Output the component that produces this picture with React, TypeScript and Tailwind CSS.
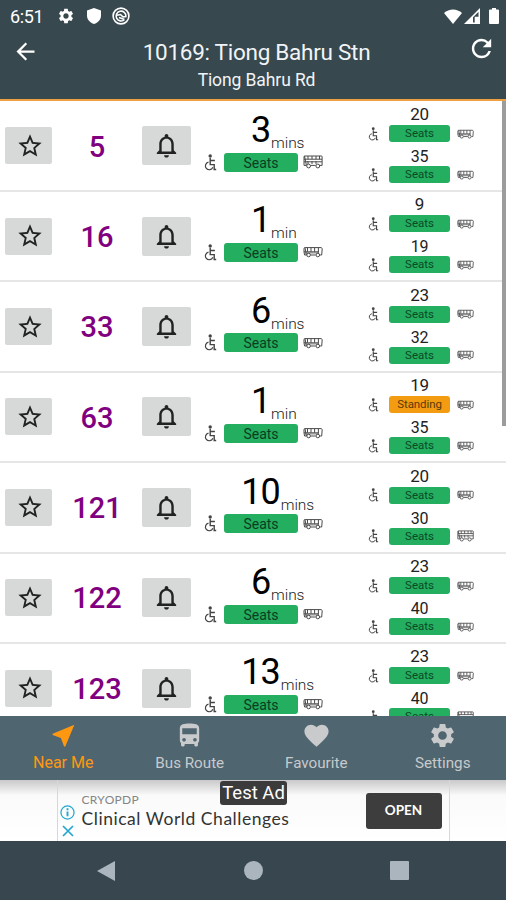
import {
  MdArrowBack,
  MdDirectionsBus,
  MdFavorite,
  MdNearMe,
  MdNotificationsNone,
  MdRefresh,
  MdSettings,
  MdStarBorder,
} from "react-icons/md";

type Arrival = {
  mins: number;
  load?: "Seats" | "Standing";
  double?: boolean;
};

type Service = {
  no: string;
  next: Arrival;
  later: Arrival[];
};

const services: Service[] = [
  { no: "5", next: { mins: 3, double: true }, later: [{ mins: 20 }, { mins: 35 }] },
  { no: "16", next: { mins: 1 }, later: [{ mins: 9 }, { mins: 19 }] },
  { no: "33", next: { mins: 6 }, later: [{ mins: 23 }, { mins: 32 }] },
  { no: "63", next: { mins: 1 }, later: [{ mins: 19, load: "Standing" }, { mins: 35 }] },
  { no: "121", next: { mins: 10 }, later: [{ mins: 20 }, { mins: 30, double: true }] },
  { no: "122", next: { mins: 6 }, later: [{ mins: 23 }, { mins: 40 }] },
  { no: "123", next: { mins: 13 }, later: [{ mins: 23 }, { mins: 40, double: true }] },
];

const WheelchairIcon = ({ className }: { className: string }) => (
  <svg viewBox="0 0 13 17" className={className} fill="none" stroke="#444" strokeWidth="1.2">
    <circle cx="6.2" cy="2" r="1.7" fill="#444" stroke="none" />
    <path d="M6.2 4v6.6h4v4.900h2M6.200 6.500h4.700" strokeWidth="1.400" />
    <path d="M4.500 8.200a3.800 3.800 0 1 0 4.300 5" />
  </svg>
);

const BusIcon = ({ double, className }: { double?: boolean; className: string }) => (
  <svg viewBox="0 0 20 14" className={className} fill="none" stroke="#4a4a4a" strokeWidth="1">
    {double ? (
      <>
        <path d="M1.5 1h17a.6.6 0 0 1 .6.6v8.8h-2.2M12.6 10.4H7.8M3.4 10.4H1V1.6A.6.6 0 0 1 1.5 1z" />
        <path d="M1 4.2h18M1 6.800h18M5 1v3.2M9 1v3.2M13 1v3.2M16.5 1v3.2M5 6v3M9 6v3M13 6v3" />
        <circle cx="5.6" cy="11" r="1.9" />
        <circle cx="14.8" cy="11" r="1.9" />
      </>
    ) : (
      <>
        <path d="M2 2.6h16.4l.8 1.2-.5 6.2h-1.6M12.6 10H7.8M3.4 10H1.6L1 7V3.6a1 1 0 0 1 1-1z" />
        <path d="M1 6.8h14.5M4.5 2.6v4M8 2.6v4M11.6 2.6v4M15.4 2.6v5" />
        <path d="M2 7.900h14" strokeWidth="1.200" opacity=".6" />
        <circle cx="5.6" cy="10" r="1.8" />
        <circle cx="14.8" cy="10" r="1.8" />
      </>
    )}
  </svg>
);

const NextBus = ({ arrival }: { arrival: Arrival }) => (
  <div className="w-[118px] ml-[13px] pt-[6.5px]">
    <div className="grid grid-cols-[1fr_auto_1fr] h-11 pr-[5px] text-black">
      <span className="col-start-2 text-[36px] leading-[44px] tracking-[-1px]">{arrival.mins}</span>
      <span className="pt-[25px] pl-px text-[15.500px] leading-5 font-light tracking-[-0.1px] text-[#222]">
        {arrival.mins === 1 ? "min" : "mins"}
      </span>
    </div>
    <div className="flex items-center h-5">
      <WheelchairIcon className="w-[13px] h-[17px] mr-[7px] shrink-0" />
      <span className="w-[74px] h-[19px] shrink-0 rounded-[3px] bg-[#23ae60] text-center text-[14px] leading-[20px] text-[#0b3d20]">
        Seats
      </span>
      <BusIcon double={arrival.double} className="w-[20px] h-[14px] ml-[5px] shrink-0" />
    </div>
  </div>
);

const LaterBus = ({ arrival, className }: { arrival: Arrival; className: string }) => {
  const standing = arrival.load === "Standing";
  return (
    <div className="h-[41px]">
      <div className={"h-[22px] w-[61px] ml-[21px] text-center text-[#222] " + className}>{arrival.mins}</div>
      <div className="flex items-center h-[17px]">
        <WheelchairIcon className="w-[11px] h-[14px] mr-[10px] shrink-0" />
        <span
          className={
            "w-[61px] h-[17px] shrink-0 rounded-[3px] text-center text-[11.5px] leading-[17px] " +
            (standing ? "bg-[#f39c12] text-[#5c3a05] tracking-[-0.1px]" : "bg-[#23ae60] text-[#0b4a26]")
          }
        >
          {arrival.load || "Seats"}
        </span>
        <BusIcon double={arrival.double} className="w-[17px] h-[12px] ml-[7px] shrink-0" />
      </div>
    </div>
  );
};

const ServiceRow = ({ service }: { service: Service }) => (
  <li className="flex h-[90.4px] shrink-0 border-b-2 border-[#e6e6e6]">
    <div className="flex items-center w-[191px] pl-[5px]">
      <button className="flex items-center justify-center w-[47px] h-[37px] rounded-[2px] bg-[#d7d8d8]">
        <MdStarBorder className="w-7 h-7 ml-[2px] text-[#222]" />
      </button>
      <span className="w-[90px] pt-[3px] text-center text-[29px] font-medium text-[#800080]">{service.no}</span>
      <button className="flex items-center justify-center w-[49px] h-[39px] rounded-[2px] bg-[#d7d8d8]">
        <MdNotificationsNone className="w-[29px] h-[29px] text-[#222]" />
      </button>
    </div>
    <NextBus arrival={service.next} />
    <div className="ml-[46px] pt-[1.5px]">
      <LaterBus arrival={service.later[0]} className="text-[17px] leading-[22px] tracking-[-0.2px]" />
      <LaterBus arrival={service.later[1]} className="text-[16px] leading-[26px] tracking-[-0.3px]" />
    </div>
  </li>
);

const tabs = [
  { label: "Near Me", Icon: MdNearMe, active: true },
  { label: "Bus Route", Icon: MdDirectionsBus },
  { label: "Favourite", Icon: MdFavorite },
  { label: "Settings", Icon: MdSettings },
];

const StatusBar = () => (
  <div className="flex items-center h-8 pl-[10px] pr-[7px] text-white">
    <span className="w-[47px] text-[18px] tracking-[-0.4px]">6:51</span>
    <MdSettings className="w-[18px] h-[18px]" />
    <svg viewBox="0 0 14 16" className="w-[14px] h-4 ml-[12px]" fill="currentColor">
      <path d="M7 0l7 2.4v5C14 11.600 11 14.600 7 16 3 14.600 0 11.600 0 7.400v-5z" />
    </svg>
    <svg viewBox="0 0 18 18" className="w-[18px] h-[18px] ml-[11px]" fill="none" stroke="currentColor" strokeWidth="1.6">
      <circle cx="9" cy="9" r="7.900" />
      <path d="M12.500 12.500A4.900 4.900 0 1 1 13.900 9.500L11 9.800 8.500 7.500 5 8.200M7 10.500l5.500 2" />
    </svg>
    <svg viewBox="0 0 18 15" className="w-[18px] h-[15px] ml-auto" fill="currentColor">
      <path d="M9 15L0 4C5-.8 13-.8 18 4z" />
    </svg>
    <svg viewBox="0 0 16 16" className="w-4 h-4 ml-[2px]" fill="currentColor">
      <path fillRule="evenodd" d="M16 0v16H0zM14.500 3.700L9 9.200v5.300h1.700V8.800h3.800z" />
      <path d="M11.800 10.300h2v3.900h-2z" />
    </svg>
    <svg viewBox="0 0 10 16" className="w-[10px] h-4 ml-[9px]" fill="currentColor">
      <path d="M3 0h4v1.500h2a1 1 0 0 1 1 1V15a1 1 0 0 1-1 1H1a1 1 0 0 1-1-1V2.500a1 1 0 0 1 1-1h2z" />
    </svg>
  </div>
);

const AdBanner = () => (
  <div className="relative flex justify-center h-[61px] bg-linear-to-b from-[#c9c9c9] via-[#fafafa] via-25% to-white">
    <div className="flex w-[393px] border-x border-[#d8d8d8]">
      <div className="flex flex-col items-center w-5 pt-[25px] gap-[5px]">
        <svg viewBox="0 0 16 16" className="w-[15px] h-[15px]" fill="none" stroke="#22a7cf" strokeWidth="1.300">
          <circle cx="8" cy="8" r="7" />
          <path d="M8 7v5M8 3.500v2" strokeWidth="2" />
        </svg>
        <svg viewBox="0 0 12 12" className="w-3 h-3" stroke="#22a7cf" strokeWidth="1.700">
          <path d="M1 1l10 10M11 1L1 11" />
        </svg>
      </div>
      <div className="pl-1 pt-3 font-['Lato',sans-serif] whitespace-nowrap">
        <p className="text-[12px] leading-4 tracking-[0.3px] text-[#858585]">CRYOPDP</p>
        <p className="text-[17.500px] leading-[22px] text-[#333] tracking-[0.540px]">Clinical World Challenges</p>
      </div>
      <button className="ml-auto mr-[7px] mt-[13px] pb-[2px] w-[76px] h-9 rounded-[3px] bg-[#3d3d3d] font-['Lato',sans-serif] text-[13.500px] font-bold text-white">
        OPEN
      </button>
    </div>
    <span className="absolute top-px left-[220px] w-[67px] h-6 rounded-[3px] bg-[#3b3b3b] text-center text-[18.500px] leading-[25px] text-white">
      Test Ad
    </span>
  </div>
);

const App = () => {
  return (
    <div className="flex flex-col w-[506px] h-[900px] overflow-hidden bg-white font-['Roboto',sans-serif]">
      <header className="h-[101px] shrink-0 bg-[#38484f] border-b-2 border-[#f0a040]">
        <StatusBar />
        <div className="flex justify-between pl-3 pr-[10px]">
          <MdArrowBack className="w-[27px] h-[27px] mt-[6px] text-white" />
          <div className="pl-[7px] text-center text-[#f1f4f6]">
            <h1 className="text-[22.500px] leading-[26px] pt-[7px] tracking-[-0.270px]">10169: Tiong Bahru Stn</h1>
            <h2 className="text-[17.500px] leading-[22px] pt-[4px] tracking-[-0.1px]">Tiong Bahru Rd</h2>
          </div>
          <MdRefresh className="w-[29px] h-[29px] mt-[2px] text-white" />
        </div>
      </header>
      <main className="relative flex-1 min-h-0 overflow-hidden">
        <ul className="flex flex-col pt-[0.6px]">
          {services.map((service) => (
            <ServiceRow key={service.no} service={service} />
          ))}
        </ul>
        <div className="absolute top-0 right-0 w-1 h-[325px] bg-[#9c9c9c]" />
      </main>
      <nav className="grid grid-cols-4 h-16 shrink-0 bg-[#4f6570]">
        {tabs.map(({ label, Icon, active }) => (
          <div
            key={label}
            className={
              "flex flex-col items-center pt-[5px] " +
              (active ? "text-[#ff9810] text-[16px]" : "text-[#c8cacc] text-[15.200px]")
            }
          >
            <Icon className="w-[29px] h-[29px]" />
            <span className="leading-5 pt-[3px]">{label}</span>
          </div>
        ))}
      </nav>
      <AdBanner />
      <footer className="flex items-center h-[59px] shrink-0 bg-[#38474f] pl-[97px] text-[#abb5be]">
        <svg viewBox="0 0 18 20" className="w-[18px] h-5" fill="currentColor">
          <path d="M18 0v20L0 10z" />
        </svg>
        <div className="w-[19px] h-[19px] ml-[129px] rounded-full bg-[#abb5be]" />
        <div className="w-[19px] h-[19px] ml-[127px] rounded-[1px] bg-[#abb5be]" />
      </footer>
    </div>
  );
};

export default App;
